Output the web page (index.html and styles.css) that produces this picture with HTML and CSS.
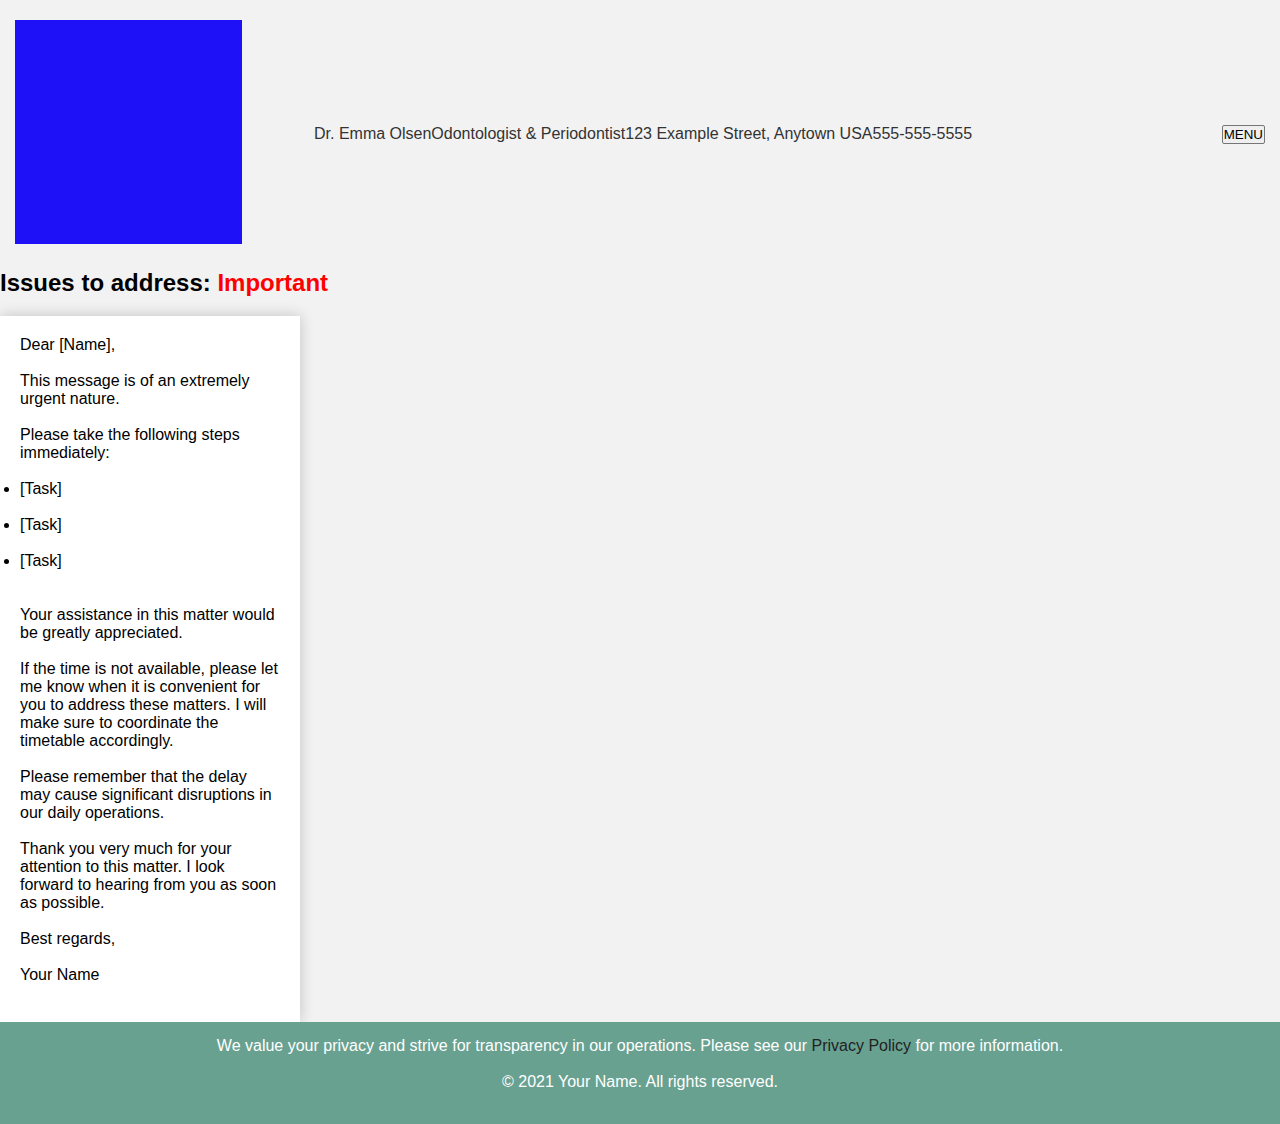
FILE: index.html
```html
<!DOCTYPE html>
<html lang="en">
<head>
<meta charset="utf-8">
<title>Issues to address</title>
<link rel="stylesheet" href="styles.css">
</head>
<body>
<header class="site-header">
  <div class="logo"></div>
  <nav class="info">
    <span>Dr. Emma Olsen</span><span>Odontologist &amp; Periodontist</span><span>123 Example Street, Anytown USA</span><span>555-555-5555</span>
  </nav>
  <button class="menu-btn">MENU</button>
</header>
<h2 class="title">Issues to address: <span class="important">Important</span></h2>
<main class="card">
  <p>Dear [Name],</p>
  <p>This message is of an extremely urgent nature.</p>
  <p>Please take the following steps immediately:</p>
  <ul class="tasks">
    <li>[Task]</li>
    <li>[Task]</li>
    <li>[Task]</li>
  </ul>
  <p>Your assistance in this matter would be greatly appreciated.</p>
  <p>If the time is not available, please let me know when it is convenient for you to address these matters. I will make sure to coordinate the timetable accordingly.</p>
  <p>Please remember that the delay may cause significant disruptions in our daily operations.</p>
  <p>Thank you very much for your attention to this matter. I look forward to hearing from you as soon as possible.</p>
  <p>Best regards,</p>
  <p>Your Name</p>
</main>
<footer class="site-footer">
  <p>We value your privacy and strive for transparency in our operations. Please see our <a href="#">Privacy Policy</a> for more information.</p>
  <p>&copy; 2021 Your Name. All rights reserved.</p>
</footer>
</body>
</html>
```
FILE: styles.css
```css
html, body {
  margin: 0;
  padding: 0;
}
body {
  background: #f2f2f2;
  font-family: "Liberation Sans", Arial, sans-serif;
  font-size: 16px;
  color: #000;
}
.site-header {
  display: flex;
  align-items: center;
  padding: 20px 15px;
}
.logo {
  width: 227px;
  height: 224px;
  background: #1f11f7;
  flex: none;
}
.info {
  flex: 1;
  margin-left: 72px;
  margin-top: 4px;
  color: #333;
  font-size: 16px;
  line-height: 18px;
}
.menu-btn {
  font-family: "Liberation Sans", Arial, sans-serif;
  font-size: 13.33px;
  padding: 1px 1px;
  border: 1px solid #767676;
  border-radius: 2px;
  background: #efefef;
  color: #000;
  margin-top: 4px;
}
.title {
  margin: 5px 0 19px;
  font-size: 24px;
  line-height: 28px;
  font-weight: bold;
}
.important {
  color: #ff0000;
}
.card {
  display: block;
  width: 260px;
  background: #fff;
  padding: 2px 20px 20px;
  box-shadow: 0 0 14px rgba(0, 0, 0, 0.2);
  line-height: 18px;
}
.card p {
  margin: 18px 0;
}
.tasks {
  margin: 18px 0 36px;
  padding-left: 0;
}
.tasks li {
  margin: 18px 0;
}
.site-footer {
  background: #69a191;
  color: #fff;
  text-align: center;
  padding: 15px 0 15px;
  line-height: 18px;
}
.site-footer p {
  margin: 0 0 18px;
}
.site-footer a {
  color: #222;
  text-decoration: none;
}
```
